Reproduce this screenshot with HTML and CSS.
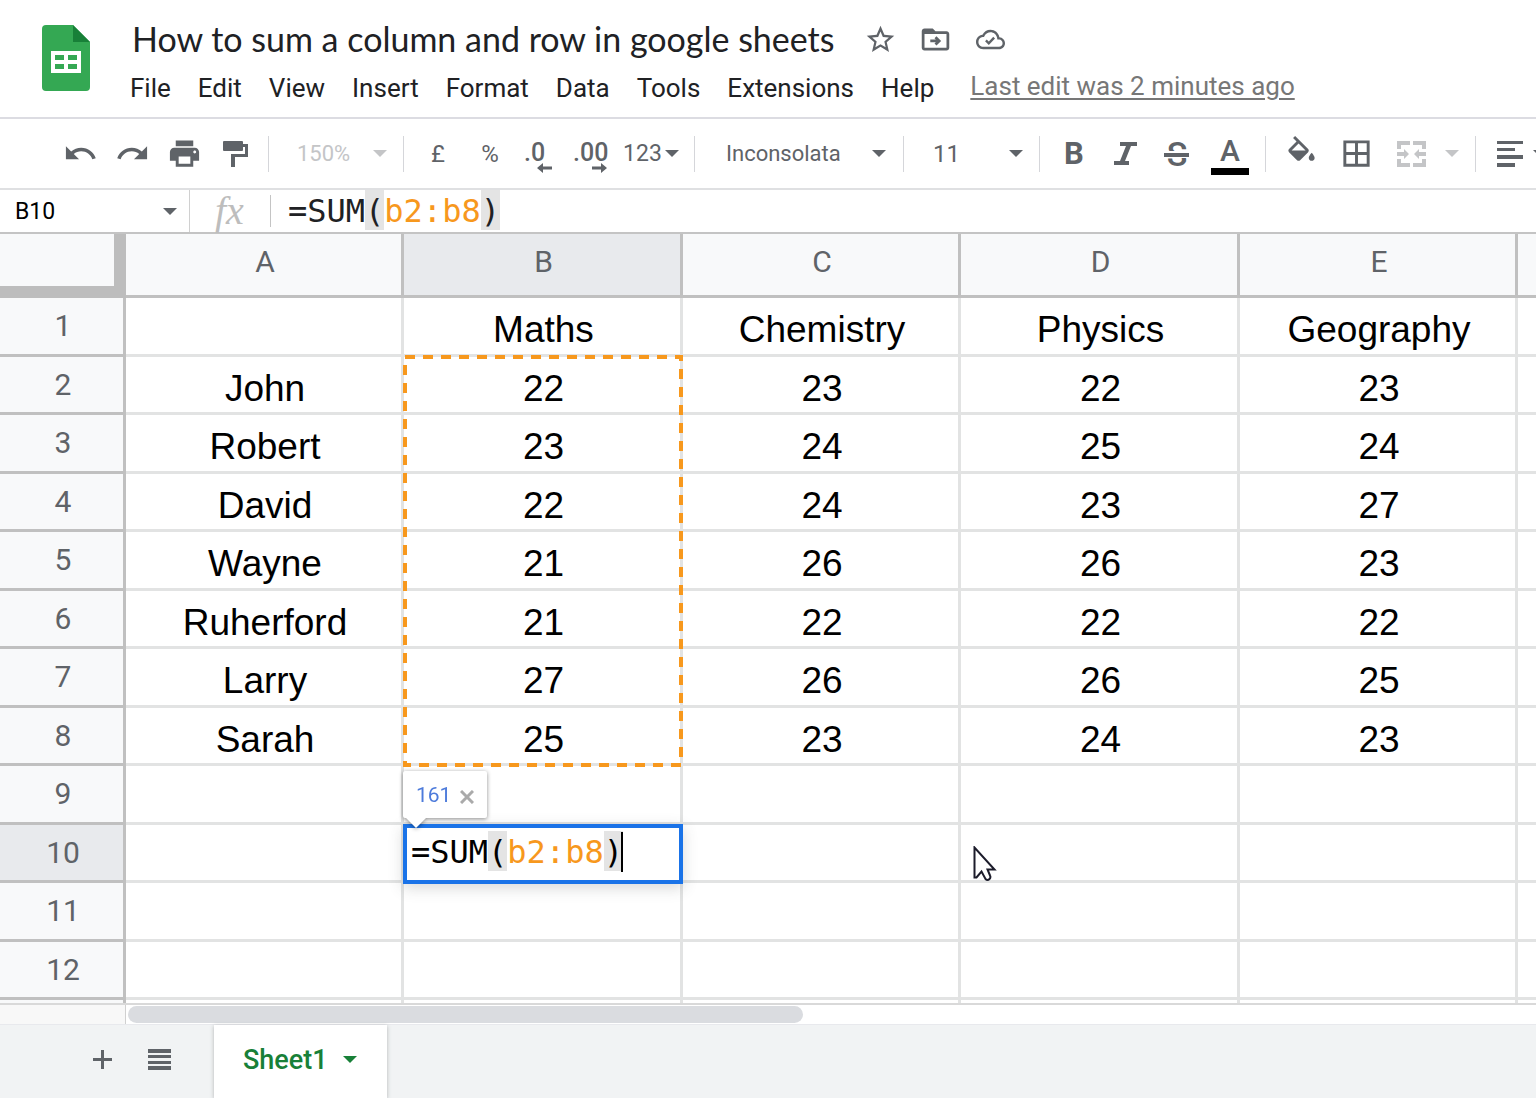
FILE: index.html
```html
<!DOCTYPE html>
<html lang="en">
<head>
<meta charset="utf-8">
<title>How to sum a column and row in google sheets</title>
<link rel="stylesheet" href="styles.css">
</head>
<body>
<div class="app">
  <header class="header">
    <svg class="logo" viewBox="0 0 48 66" aria-hidden="true">
      <path fill="#34a853" d="M4 0h27l17 17v45a4 4 0 0 1-4 4H4a4 4 0 0 1-4-4V4a4 4 0 0 1 4-4z"/>
      <path fill="#188038" d="M31 0l17 17H31z"/>
      <path fill="#fff" fill-rule="evenodd" d="M9 26h30v22H9zM13 30v5h9v-5zM26 30v5h9v-5zM13 39v5h9v-5zM26 39v5h9v-5z"/>
    </svg>
    <div class="heading">
      <div class="title-row">
        <h1 class="title">How to sum a column and row in google sheets</h1>
        <button class="title-button" aria-label="Star"><svg width="33" height="33" viewBox="0 0 24 24"><path d="M22 9.24l-7.19-.62L12 2 9.19 8.63 2 9.24l5.46 4.73L5.82 21 12 17.27 18.18 21l-1.63-7.03L22 9.24zM12 15.4l-3.76 2.27 1-4.28-3.32-2.88 4.38-.38L12 6.1l1.71 4.04 4.38.38-3.32 2.88 1 4.28L12 15.4z"/></svg></button>
        <button class="title-button" aria-label="Move"><svg width="33" height="33" viewBox="0 0 24 24"><path d="M20 6h-8l-2-2H4c-1.1 0-2 .9-2 2v12c0 1.1.9 2 2 2h16c1.1 0 2-.9 2-2V8c0-1.1-.9-2-2-2zm0 12H4V8h16z"/><path class="line" d="M8.200 13h6M12 10.300l2.700 2.700-2.700 2.700"/></svg></button>
        <button class="title-button" aria-label="Document status"><svg width="29" height="29" viewBox="0 0 24 24"><path d="M19.350 10.040C18.670 6.590 15.640 4 12 4 9.110 4 6.600 5.640 5.350 8.040 2.340 8.360 0 10.910 0 14c0 3.310 2.690 6 6 6h13c2.760 0 5-2.240 5-5 0-2.640-2.050-4.780-4.650-4.960zM19 18H6c-2.210 0-4-1.790-4-4 0-2.050 1.530-3.760 3.560-3.970l1.070-.11.5-.95C8.080 7.140 9.940 6 12 6c2.620 0 4.880 1.860 5.390 4.430l.3 1.500 1.530.11c1.560.1 2.780 1.410 2.780 2.960 0 1.650-1.350 3-3 3z"/><path class="line" d="M8.200 12.700l2.400 2.400 4.400-4.600"/></svg></button>
      </div>
      <nav class="menu">
        <button class="menu-item">File</button>
        <button class="menu-item">Edit</button>
        <button class="menu-item">View</button>
        <button class="menu-item">Insert</button>
        <button class="menu-item">Format</button>
        <button class="menu-item">Data</button>
        <button class="menu-item">Tools</button>
        <button class="menu-item">Extensions</button>
        <button class="menu-item">Help</button>
        <a class="last-edit" href="#">Last edit was 2 minutes ago</a>
      </nav>
    </div>
  </header>

  <div class="toolbar" role="toolbar">
    <button class="tool" aria-label="Undo"><svg viewBox="0 0 24 24"><path d="M12.500 8c-2.650 0-5.050.99-6.900 2.600L2 7v9h9l-3.620-3.620c1.390-1.160 3.160-1.880 5.120-1.880 3.540 0 6.550 2.310 7.600 5.500l2.370-.78C21.080 11.030 17.150 8 12.500 8z"/></svg></button>
    <button class="tool" aria-label="Redo"><svg viewBox="0 0 24 24"><path d="M18.400 10.600C16.550 8.990 14.150 8 11.500 8c-4.650 0-8.580 3.030-9.960 7.220L3.900 16c1.050-3.190 4.050-5.500 7.600-5.500 1.950 0 3.730.72 5.120 1.880L13 16h9V7l-3.600 3.600z"/></svg></button>
    <button class="tool" aria-label="Print"><svg viewBox="0 0 24 24"><path d="M19 8H5c-1.660 0-3 1.340-3 3v6h4v4h12v-4h4v-6c0-1.660-1.340-3-3-3zm-3 11H8v-5h8v5zm3-7c-.55 0-1-.45-1-1s.45-1 1-1 1 .45 1 1-.45 1-1 1zm-1-9H6v4h12V3z"/></svg></button>
    <button class="tool" aria-label="Paint format"><svg viewBox="0 0 35 35"><rect x="4" y="5" width="20" height="10" rx="1"/><path d="M23 8h6v13H16v10h-4V18h14v-7h-3z"/></svg></button>
    <span class="separator"></span>
    <label class="picker picker-zoom"><select aria-label="Zoom" disabled><option>150%</option></select><svg class="caret" viewBox="0 0 14 7"><path d="M0 0h14L7 7z"/></svg></label>
    <span class="separator"></span>
    <div class="tool-group">
      <button class="tool tool-text">£</button>
      <button class="tool tool-text">%</button>
      <button class="tool" aria-label="Decrease decimal places"><svg viewBox="0 0 35 35"><text class="digits" x="-1" y="25">.0</text><path d="M12 32l6-5v3.500h9v3h-9V37z"/></svg></button>
      <button class="tool" aria-label="Increase decimal places"><svg viewBox="0 0 35 35"><text class="digits" x="-4" y="25">.00</text><path d="M30 32l-6-5v3.500h-9v3h9V37z"/></svg></button>
      <button class="tool tool-format">123<svg class="caret" viewBox="0 0 14 7"><path d="M0 0h14L7 7z"/></svg></button>
    </div>
    <span class="separator"></span>
    <label class="picker picker-font"><select aria-label="Font"><option>Inconsolata</option></select><svg class="caret" viewBox="0 0 14 7"><path d="M0 0h14L7 7z"/></svg></label>
    <span class="separator"></span>
    <label class="picker picker-size"><select aria-label="Font size"><option>11</option></select><svg class="caret" viewBox="0 0 14 7"><path d="M0 0h14L7 7z"/></svg></label>
    <span class="separator"></span>
    <div class="tool-group tool-group-style">
      <button class="tool tool-bold">B</button>
      <button class="tool" aria-label="Italic"><svg viewBox="0 0 35 35"><path d="M11 6h17v4h-6l-6 15h4v4H5v-4h6l6-15h-6z"/></svg></button>
      <button class="tool" aria-label="Strikethrough"><svg viewBox="0 0 35 35"><text class="strike" x="16" y="30">S</text><path class="strike-gap" d="M2 15h28v7H2z"/><path d="M3 17h25v4H3z"/></svg></button>
      <button class="tool tool-color">A</button>
    </div>
    <span class="separator"></span>
    <div class="tool-group tool-group-wide">
      <button class="tool" aria-label="Fill colour"><svg viewBox="0 0 24 24"><path d="M16.560 8.940L7.620 0 6.210 1.410l2.380 2.380-5.150 5.150c-.59.59-.59 1.540 0 2.120l5.500 5.500c.29.29.68.44 1.060.44s.77-.15 1.060-.44l5.500-5.500c.59-.58.59-1.530 0-2.120zM5.210 10L10 5.210 14.790 10H5.210zM19 11.500s-2 2.170-2 3.500c0 1.100.9 2 2 2s2-.9 2-2c0-1.330-2-3.500-2-3.500z"/></svg></button>
      <button class="tool" aria-label="Borders"><svg viewBox="0 0 24 24"><path d="M3 3v18h18V3H3zm8 16H5v-6h6v6zm0-8H5V5h6v6zm8 8h-6v-6h6v6zm0-8h-6V5h6v6z"/></svg></button>
      <button class="tool" aria-label="Merge cells" disabled><svg viewBox="0 0 35 35"><path d="M3 5h13v4H7v4H3zM19 5h13v8h-4V9h-9zM3 23h4v4h9v4H3zM28 23h4v8H19v-4h9zM3 16h7v-3l5 5-5 5v-3H3zM32 16h-7v-3l-5 5 5 5v-3h7z"/></svg></button>
      <button class="tool tool-narrow" aria-label="Merge options" disabled><svg class="caret" viewBox="0 0 14 7"><path d="M0 0h14L7 7z"/></svg></button>
    </div>
    <span class="separator"></span>
    <button class="tool tool-align" aria-label="Horizontal align"><svg viewBox="0 0 35 35"><path d="M5 5h26v3H5zM5 12h18v3H5zM5 19h26v4H5zM5 27h18v4H5z"/></svg><svg class="caret" viewBox="0 0 14 7"><path d="M0 0h14L7 7z"/></svg></button>
  </div>

  <div class="formula-bar">
    <label class="name-box"><input aria-label="Name box" value="B10"><svg class="caret" viewBox="0 0 14 7"><path d="M0 0h14L7 7z"/></svg></label>
    <span class="fx">fx</span>
    <div class="formula" role="textbox" contenteditable="true" spellcheck="false" aria-label="Formula">=SUM<span class="paren">(</span><span class="range">b2:b8</span><span class="paren">)</span></div>
  </div>

  <main class="grid">
    <table class="sheet">
      <colgroup><col class="col-head"><col class="col-odd"><col class="col-even"><col class="col-odd"><col class="col-even"><col class="col-odd"><col></colgroup>
      <thead>
        <tr><td class="corner"></td><th>A</th><th class="active">B</th><th>C</th><th>D</th><th>E</th><th></th></tr>
      </thead>
      <tbody>
        <tr><th>1</th><td></td><td>Maths</td><td>Chemistry</td><td>Physics</td><td>Geography</td><td></td></tr>
        <tr><th>2</th><td>John</td><td>22</td><td>23</td><td>22</td><td>23</td><td></td></tr>
        <tr><th>3</th><td>Robert</td><td>23</td><td>24</td><td>25</td><td>24</td><td></td></tr>
        <tr><th>4</th><td>David</td><td>22</td><td>24</td><td>23</td><td>27</td><td></td></tr>
        <tr><th>5</th><td>Wayne</td><td>21</td><td>26</td><td>26</td><td>23</td><td></td></tr>
        <tr><th>6</th><td>Ruherford</td><td>21</td><td>22</td><td>22</td><td>22</td><td></td></tr>
        <tr><th>7</th><td>Larry</td><td>27</td><td>26</td><td>26</td><td>25</td><td></td></tr>
        <tr><th>8</th><td>Sarah</td><td>25</td><td>23</td><td>24</td><td>23</td><td></td></tr>
        <tr><th>9</th><td></td><td></td><td></td><td></td><td></td><td></td></tr>
        <tr><th class="active">10</th><td></td><td></td><td></td><td></td><td></td><td></td></tr>
        <tr><th>11</th><td></td><td></td><td></td><td></td><td></td><td></td></tr>
        <tr><th>12</th><td></td><td></td><td></td><td></td><td></td><td></td></tr>
        <tr><th></th><td></td><td></td><td></td><td></td><td></td><td></td></tr>
      </tbody>
    </table>
    <svg class="range-outline" viewBox="0 0 280 412" aria-hidden="true"><rect x="2" y="2" width="276" height="408"/></svg>
    <div class="cell-editor" role="textbox" contenteditable="true" spellcheck="false" aria-label="B10">=SUM<span class="paren">(</span><span class="range">b2:b8</span><span class="paren">)</span><span class="text-cursor"></span></div>
    <div class="preview">161<button class="preview-close" aria-label="Close"><svg width="14" height="14" viewBox="0 0 14 14"><path d="M1 1l12 12M13 1L1 13"/></svg></button></div>
    <svg class="pointer" viewBox="0 0 24 36" aria-hidden="true"><path d="M1.500 1.500v30h2l5-6 4 7.500q2 2 4 0 1.500-1.500.5-3.500l-2.500-6h7z"/></svg>
  </main>

  <div class="scroll-row">
    <div class="scroll-corner"></div>
    <div class="scroll-track"><div class="scroll-thumb"></div></div>
  </div>

  <footer class="tabs">
    <button class="tab-button" aria-label="Add sheet"><svg width="19" height="19" viewBox="0 0 19 19"><path d="M8 0h3v8h8v3h-8v8H8v-8H0V8h8z"/></svg></button>
    <button class="tab-button" aria-label="All sheets"><svg width="23" height="21" viewBox="0 0 23 21"><path d="M0 0h23v4H0zM0 6h23v3H0zM0 12h23v3H0zM0 17h23v4H0z"/></svg></button>
    <button class="tab">Sheet1<svg class="caret" viewBox="0 0 14 7"><path d="M0 0h14L7 7z"/></svg></button>
  </footer>
</div>
</body>
</html>
```
FILE: styles.css
```css
* { box-sizing: border-box; }

body {
  margin: 0;
  font-family: Roboto, "Liberation Sans", sans-serif;
  color: #202124;
  background: #fff;
}

button, input, select {
  margin: 0;
  padding: 0;
  border: 0;
  background: none;
  font: inherit;
  color: inherit;
}

svg { display: block; flex: none; fill: currentColor; }

.app {
  display: flex;
  flex-direction: column;
  height: 100vh;
  overflow: hidden;
}

.caret { width: 14px; height: 7px; }

/* Header */
.header {
  display: flex;
  flex: none;
  height: 119px;
  padding: 25px 0 0 42px;
  border-bottom: 2px solid #dcdce2;
}
.logo { width: 48px; height: 66px; margin-right: 40px; }
.title-row { display: flex; align-items: center; height: 28px; }
.title {
  margin: 0 18px 0 2px;
  font: 400 34px/40px Lato, sans-serif;
  white-space: nowrap;
}
.title-button {
  display: flex;
  justify-content: center;
  width: 55px;
  color: #5f6368;
}
.line { fill: none; stroke: currentColor; stroke-width: 2; }
.menu {
  display: flex;
  align-items: center;
  gap: 27px;
  margin-top: 17px;
  height: 36px;
  font-size: 26px;
  line-height: 36px;
  white-space: nowrap;
}
.last-edit {
  margin-left: 9px;
  padding-bottom: 4px;
  color: #777;
  text-underline-offset: 3px;
}

/* Toolbar */
.toolbar {
  display: flex;
  flex: none;
  align-items: center;
  height: 71px;
  padding-left: 54px;
  border-bottom: 2px solid #dfe0e2;
  color: #5f6368;
  font-size: 24px;
}
.tool {
  display: flex;
  flex: none;
  align-items: center;
  justify-content: center;
  width: 52px;
  height: 52px;
}
.tool svg:not(.caret) { width: 35px; height: 35px; overflow: visible; }
.tool:disabled { color: #c4c5c7; }
.separator {
  flex: none;
  width: 1px;
  height: 36px;
  background: #d5d6da;
}
.tool + .separator { margin-left: 6px; }
.tool-group { display: flex; padding: 0 4px 0 8px; }
.tool-group-style { padding-right: 9px; }
.tool-group-wide { padding-right: 10px; }
.tool-group-wide .tool { width: 55px; }
.tool-group-wide .tool-narrow { width: 26px; }
.digits { font: 500 25px Roboto, sans-serif; }
.tool-format { width: 70px; padding-right: 8px; gap: 3px; font-size: 23px; }
.tool-bold { font-weight: 700; font-size: 31px; }
.strike { font: 500 34px Roboto, sans-serif; text-anchor: middle; }
.strike-gap { fill: #fff; }
.tool-color {
  position: relative;
  padding-bottom: 6px;
  font-weight: 500;
  font-size: 30px;
}
.tool-color::after {
  content: "";
  position: absolute;
  left: 7px;
  bottom: 5px;
  width: 38px;
  height: 7px;
  background: #000;
}
.tool-align { width: 80px; gap: 6px; margin-left: 3px; }
.picker { display: flex; flex: none; align-items: center; }
.picker select {
  flex: 1;
  min-width: 0;
  appearance: none;
  height: 40px;
  opacity: 1;
}
.picker-zoom { width: 134px; padding: 0 16px 0 28px; font-size: 22px; color: #c4c5c7; }
.picker-font { width: 208px; padding: 0 17px 0 31px; font-size: 22px; }
.picker-size { width: 135px; padding: 0 16px 0 29px; }

/* Formula bar */
.formula-bar {
  display: flex;
  flex: none;
  align-items: center;
  height: 44px;
  border-bottom: 2px solid #c4c4c4;
}
.name-box {
  display: flex;
  flex: none;
  align-items: center;
  width: 190px;
  height: 42px;
  padding: 0 12px 0 15px;
  border-right: 1px solid #d0d0d0;
  font-size: 23px;
  color: #000;
}
.name-box input { flex: 1; min-width: 0; }
.name-box .caret { color: #5f6368; }
.fx {
  width: 81px;
  padding-left: 25px;
  border-right: 1px solid #c4c4c4;
  font: italic 40px/32px "Liberation Serif", serif;
  color: #bdbdbd;
}
.formula, .cell-editor {
  font: 32px/40px "DejaVu Sans Mono", monospace;
  white-space: nowrap;
  outline: 0;
}
.formula { flex: 1; padding-left: 17px; }
.paren { padding-top: 2px; background: #e4e4e4; }
.range { color: #f7981d; }

/* Grid */
.grid {
  position: relative;
  flex: 1;
  min-height: 0;
  overflow: hidden;
}
.sheet {
  width: 100%;
  min-width: 1536px;
  table-layout: fixed;
  border-collapse: separate;
  border-spacing: 0;
  text-align: center;
}
.col-head { width: 126px; }
.col-odd { width: 278px; }
.col-even { width: 279px; }
.sheet th, .sheet td {
  padding: 0 0 0 3px;
  border: solid #e2e3e3;
  border-width: 0 3px 3px 0;
}
.sheet th {
  border-color: #c0c0c0;
  background: #f8f9fa;
  font-weight: 400;
  font-size: 30px;
  line-height: 32px;
  color: #5f6368;
}
.sheet tr > :last-child { border-right-width: 0; }
.sheet thead th { height: 64px; padding-bottom: 5px; }
.sheet .active { background: #e8eaed; }
.sheet .corner {
  border: solid #bdbdbd;
  border-width: 0 12px 12px 0;
  background: #f8f9fa;
}
.sheet tbody tr { height: 59px; }
.sheet tbody tr:nth-child(even) { height: 58px; }
.sheet tbody td {
  padding-top: 8px;
  font: 37px/42px "Liberation Sans", Arial, sans-serif;
  color: #000;
}

/* Overlays on the grid */
.range-outline {
  position: absolute;
  left: 403px;
  top: 121px;
  width: 280px;
  height: 412px;
  fill: none;
  stroke: #f7981d;
  stroke-width: 4;
  stroke-dasharray: 10 8;
}
.cell-editor {
  position: absolute;
  left: 403px;
  top: 590px;
  width: 280px;
  height: 60px;
  padding: 4px;
  border: 4px solid #1a73e8;
  background: #fff;
  box-shadow: 0 4px 14px rgba(60, 64, 67, .2);
  color: #000;
}
.text-cursor {
  display: inline-block;
  width: 2px;
  height: 40px;
  margin-left: -2px;
  background: #000;
  vertical-align: top;
}
.preview {
  position: absolute;
  left: 403px;
  top: 537px;
  display: flex;
  align-items: center;
  gap: 9px;
  width: 84px;
  height: 47px;
  padding-left: 13px;
  border-radius: 2px;
  background: #fff;
  filter: drop-shadow(0 1px 2px rgba(0, 0, 0, .45));
  font-size: 21px;
  color: #4d7bdb;
}
.preview::after {
  content: "";
  position: absolute;
  left: 2px;
  top: 46px;
  border: solid transparent;
  border-width: 11px 11px 0;
  border-top-color: #fff;
}
.preview-close { padding-top: 4px; color: #aaa; }
.preview-close svg { stroke: currentColor; stroke-width: 3; }
.pointer {
  position: absolute;
  left: 973px;
  top: 612px;
  width: 24px;
  height: 36px;
  fill: #fff;
  stroke: #1c1c2b;
  stroke-width: 2;
}

/* Horizontal scrollbar */
.scroll-row {
  display: flex;
  flex: none;
  height: 22px;
  border-top: 2px solid #d9d9d9;
  border-bottom: 1px solid #e8e9ed;
}
.scroll-corner { width: 126px; border-right: 1px solid #d0d0d0; background: #f8f8f8; }
.scroll-track { flex: 1; padding: 1px 2px; }
.scroll-thumb { width: 48%; height: 17px; border-radius: 9px; background: #dadce0; }

/* Sheet tabs */
.tabs {
  display: flex;
  flex: none;
  align-items: stretch;
  height: 73px;
  padding-left: 74px;
  background: #f1f3f4;
}
.tab-button {
  display: flex;
  align-items: center;
  justify-content: center;
  width: 57px;
  padding-bottom: 4px;
  color: #5f6368;
}
.tab {
  display: flex;
  align-items: center;
  gap: 15px;
  margin-left: 26px;
  padding: 0 30px 4px 29px;
  background: #fff;
  box-shadow: 0 1px 4px rgba(60, 64, 67, .35);
  font-weight: 500;
  font-size: 27px;
  color: #188038;
}
```
